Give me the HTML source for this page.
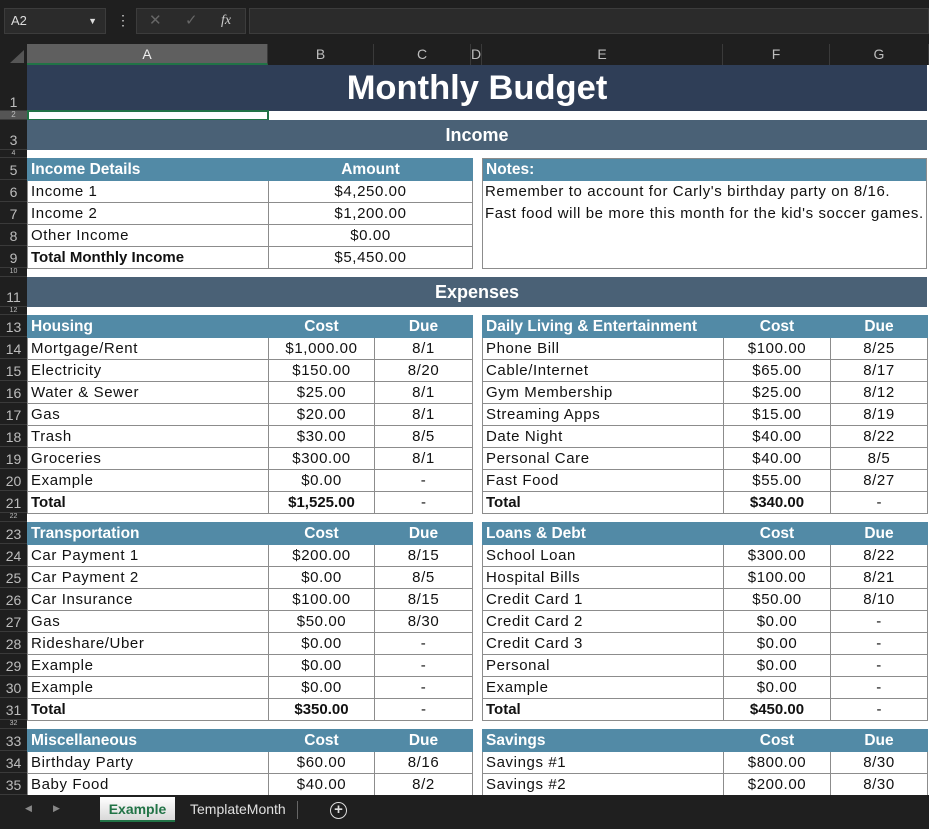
<!DOCTYPE html><html><head><style>
*{margin:0;padding:0;box-sizing:border-box}
body{width:929px;height:829px;overflow:hidden;background:#fff;font-family:"Liberation Sans",sans-serif;position:relative}
.a{position:absolute}
table{position:absolute;border-collapse:collapse;table-layout:fixed;font-size:15px;letter-spacing:0.6px;color:#111}
td{height:22px;border:1px solid #8c8c8c;padding:0 3px;white-space:nowrap;overflow:hidden;line-height:20px}
td.c{text-align:center}
tr.h td{background:#528aa6;color:#fff;font-weight:bold;font-size:15.5px;letter-spacing:0;border-color:#528aa6}
tr.t td{font-weight:bold;letter-spacing:0}
.rh{position:absolute;left:0;width:27px;background:#1f1f1f;color:#bdbdbd;font-size:14px;text-align:center;border-bottom:1px solid #3a3a3a;line-height:1}
.ch{position:absolute;top:44px;height:21px;background:#1f1f1f;color:#bdbdbd;font-size:14px;text-align:center;line-height:21px;border-right:1px solid #3a3a3a}
.band{position:absolute;left:27px;width:900px;background:#4a6176;color:#fff;font-weight:bold;text-align:center;font-size:18px}
</style></head><body>
<div class="a" style="left:0;top:0;width:929px;height:44px;background:#1f1f1f"></div>
<div class="a" style="left:4px;top:8px;width:102px;height:26px;background:#2b2b2b;border:1px solid #3c3c3c;color:#ddd;font-size:13px;line-height:24px;padding-left:6px">A2<span style="position:absolute;right:8px;top:0;font-size:9px">▼</span></div>
<div class="a" style="left:116px;top:12px;color:#ccc;font-size:14px">⋮</div>
<div class="a" style="left:136px;top:8px;width:110px;height:26px;background:#2b2b2b;border:1px solid #3c3c3c;color:#666;font-size:15px;line-height:24px"><span style="position:absolute;left:12px">✕</span><span style="position:absolute;left:48px">✓</span><span style="position:absolute;left:84px;color:#ccc;font-style:italic;font-family:'Liberation Serif';font-size:14px">fx</span></div>
<div class="a" style="left:249px;top:8px;width:680px;height:26px;background:#2b2b2b;border:1px solid #3c3c3c"></div>
<div class="a" style="left:0;top:44px;width:27px;height:21px;background:#1f1f1f"></div>
<div class="a" style="left:10px;top:50px;width:0;height:0;border-left:14px solid transparent;border-bottom:13px solid #555"></div>
<div class="ch" style="left:27px;width:241px;background:#5f5f5f;color:#eee;border-bottom:2px solid #217346">A</div>
<div class="ch" style="left:268px;width:106px">B</div>
<div class="ch" style="left:374px;width:97px">C</div>
<div class="ch" style="left:471px;width:11px;text-align:left">D</div>
<div class="ch" style="left:482px;width:241px">E</div>
<div class="ch" style="left:723px;width:107px">F</div>
<div class="ch" style="left:830px;width:99px">G</div>

<div class="rh" style="top:65px;height:46px;padding-top:30px">1</div>
<div class="rh" style="top:111px;height:9px;font-size:8px;background:#555">2</div>
<div class="rh" style="top:120px;height:30px;padding-top:13px">3</div>
<div class="rh" style="top:150px;height:8px;font-size:7px">4</div>
<div class="rh" style="top:158px;height:22px;padding-top:5px">5</div>
<div class="rh" style="top:180px;height:22px;padding-top:5px">6</div>
<div class="rh" style="top:202px;height:22px;padding-top:5px">7</div>
<div class="rh" style="top:224px;height:22px;padding-top:5px">8</div>
<div class="rh" style="top:246px;height:22px;padding-top:5px">9</div>
<div class="rh" style="top:268px;height:9px;font-size:7px">10</div>
<div class="rh" style="top:277px;height:30px;padding-top:13px">11</div>
<div class="rh" style="top:307px;height:8px;font-size:7px">12</div>
<div class="rh" style="top:315px;height:22px;padding-top:5px">13</div>
<div class="rh" style="top:337px;height:22px;padding-top:5px">14</div>
<div class="rh" style="top:359px;height:22px;padding-top:5px">15</div>
<div class="rh" style="top:381px;height:22px;padding-top:5px">16</div>
<div class="rh" style="top:403px;height:22px;padding-top:5px">17</div>
<div class="rh" style="top:425px;height:22px;padding-top:5px">18</div>
<div class="rh" style="top:447px;height:22px;padding-top:5px">19</div>
<div class="rh" style="top:469px;height:22px;padding-top:5px">20</div>
<div class="rh" style="top:491px;height:22px;padding-top:5px">21</div>
<div class="rh" style="top:513px;height:9px;font-size:7px">22</div>
<div class="rh" style="top:522px;height:22px;padding-top:5px">23</div>
<div class="rh" style="top:544px;height:22px;padding-top:5px">24</div>
<div class="rh" style="top:566px;height:22px;padding-top:5px">25</div>
<div class="rh" style="top:588px;height:22px;padding-top:5px">26</div>
<div class="rh" style="top:610px;height:22px;padding-top:5px">27</div>
<div class="rh" style="top:632px;height:22px;padding-top:5px">28</div>
<div class="rh" style="top:654px;height:22px;padding-top:5px">29</div>
<div class="rh" style="top:676px;height:22px;padding-top:5px">30</div>
<div class="rh" style="top:698px;height:22px;padding-top:5px">31</div>
<div class="rh" style="top:720px;height:9px;font-size:7px">32</div>
<div class="rh" style="top:729px;height:22px;padding-top:5px">33</div>
<div class="rh" style="top:751px;height:22px;padding-top:5px">34</div>
<div class="rh" style="top:773px;height:22px;padding-top:5px">35</div>

<div class="a" style="left:27px;top:65px;width:900px;height:46px;background:#2f3e57;color:#fff;font-weight:bold;font-size:34.5px;text-align:center;line-height:46px">Monthly Budget</div>
<div class="a" style="left:27px;top:110px;width:242px;height:11px;border:2px solid #217346"></div>
<div class="band" style="top:120px;height:30px;line-height:30px">Income</div>
<div class="band" style="top:277px;height:30px;line-height:30px">Expenses</div>

<table style="left:27px;top:158px;width:445px"><colgroup><col style="width:241px"><col style="width:204px"></colgroup>
<tr class="h"><td>Income Details</td><td class="c">Amount</td></tr>
<tr><td>Income 1</td><td class="c">$4,250.00</td></tr>
<tr><td>Income 2</td><td class="c">$1,200.00</td></tr>
<tr><td>Other Income</td><td class="c">$0.00</td></tr>
<tr><td style="font-weight:bold;letter-spacing:0">Total Monthly Income</td><td class="c">$5,450.00</td></tr></table>

<div class="a" style="left:482px;top:158px;width:445px;height:111px;border:1px solid #8c8c8c;font-size:15px;letter-spacing:0.6px;color:#111">
<div style="background:#528aa6;color:#fff;font-weight:bold;font-size:15.5px;letter-spacing:0;height:22px;line-height:22px;padding-left:3px">Notes:</div>
<div style="padding-left:2px;line-height:22px;white-space:nowrap">Remember to account for Carly's birthday party on 8/16.<br>Fast food will be more this month for the kid's soccer games.</div></div>

<table style="left:27px;top:315px;width:445px"><colgroup><col style="width:241px"><col style="width:106px"><col style="width:98px"></colgroup>
<tr class="h"><td>Housing</td><td class="c">Cost</td><td class="c">Due</td></tr>
<tr><td>Mortgage/Rent</td><td class="c">$1,000.00</td><td class="c">8/1</td></tr>
<tr><td>Electricity</td><td class="c">$150.00</td><td class="c">8/20</td></tr>
<tr><td>Water &amp; Sewer</td><td class="c">$25.00</td><td class="c">8/1</td></tr>
<tr><td>Gas</td><td class="c">$20.00</td><td class="c">8/1</td></tr>
<tr><td>Trash</td><td class="c">$30.00</td><td class="c">8/5</td></tr>
<tr><td>Groceries</td><td class="c">$300.00</td><td class="c">8/1</td></tr>
<tr><td>Example</td><td class="c">$0.00</td><td class="c">-</td></tr>
<tr class="t"><td>Total</td><td class="c">$1,525.00</td><td class="c" style="font-weight:normal">-</td></tr></table>

<table style="left:482px;top:315px;width:445px"><colgroup><col style="width:241px"><col style="width:107px"><col style="width:97px"></colgroup>
<tr class="h"><td>Daily Living &amp; Entertainment</td><td class="c">Cost</td><td class="c">Due</td></tr>
<tr><td>Phone Bill</td><td class="c">$100.00</td><td class="c">8/25</td></tr>
<tr><td>Cable/Internet</td><td class="c">$65.00</td><td class="c">8/17</td></tr>
<tr><td>Gym Membership</td><td class="c">$25.00</td><td class="c">8/12</td></tr>
<tr><td>Streaming Apps</td><td class="c">$15.00</td><td class="c">8/19</td></tr>
<tr><td>Date Night</td><td class="c">$40.00</td><td class="c">8/22</td></tr>
<tr><td>Personal Care</td><td class="c">$40.00</td><td class="c">8/5</td></tr>
<tr><td>Fast Food</td><td class="c">$55.00</td><td class="c">8/27</td></tr>
<tr class="t"><td>Total</td><td class="c">$340.00</td><td class="c" style="font-weight:normal">-</td></tr></table>

<table style="left:27px;top:522px;width:445px"><colgroup><col style="width:241px"><col style="width:106px"><col style="width:98px"></colgroup>
<tr class="h"><td>Transportation</td><td class="c">Cost</td><td class="c">Due</td></tr>
<tr><td>Car Payment 1</td><td class="c">$200.00</td><td class="c">8/15</td></tr>
<tr><td>Car Payment 2</td><td class="c">$0.00</td><td class="c">8/5</td></tr>
<tr><td>Car Insurance</td><td class="c">$100.00</td><td class="c">8/15</td></tr>
<tr><td>Gas</td><td class="c">$50.00</td><td class="c">8/30</td></tr>
<tr><td>Rideshare/Uber</td><td class="c">$0.00</td><td class="c">-</td></tr>
<tr><td>Example</td><td class="c">$0.00</td><td class="c">-</td></tr>
<tr><td>Example</td><td class="c">$0.00</td><td class="c">-</td></tr>
<tr class="t"><td>Total</td><td class="c">$350.00</td><td class="c" style="font-weight:normal">-</td></tr></table>

<table style="left:482px;top:522px;width:445px"><colgroup><col style="width:241px"><col style="width:107px"><col style="width:97px"></colgroup>
<tr class="h"><td>Loans &amp; Debt</td><td class="c">Cost</td><td class="c">Due</td></tr>
<tr><td>School Loan</td><td class="c">$300.00</td><td class="c">8/22</td></tr>
<tr><td>Hospital Bills</td><td class="c">$100.00</td><td class="c">8/21</td></tr>
<tr><td>Credit Card 1</td><td class="c">$50.00</td><td class="c">8/10</td></tr>
<tr><td>Credit Card 2</td><td class="c">$0.00</td><td class="c">-</td></tr>
<tr><td>Credit Card 3</td><td class="c">$0.00</td><td class="c">-</td></tr>
<tr><td>Personal</td><td class="c">$0.00</td><td class="c">-</td></tr>
<tr><td>Example</td><td class="c">$0.00</td><td class="c">-</td></tr>
<tr class="t"><td>Total</td><td class="c">$450.00</td><td class="c" style="font-weight:normal">-</td></tr></table>

<table style="left:27px;top:729px;width:445px"><colgroup><col style="width:241px"><col style="width:106px"><col style="width:98px"></colgroup>
<tr class="h"><td>Miscellaneous</td><td class="c">Cost</td><td class="c">Due</td></tr>
<tr><td>Birthday Party</td><td class="c">$60.00</td><td class="c">8/16</td></tr>
<tr><td>Baby Food</td><td class="c">$40.00</td><td class="c">8/2</td></tr></table>

<table style="left:482px;top:729px;width:445px"><colgroup><col style="width:241px"><col style="width:107px"><col style="width:97px"></colgroup>
<tr class="h"><td>Savings</td><td class="c">Cost</td><td class="c">Due</td></tr>
<tr><td>Savings #1</td><td class="c">$800.00</td><td class="c">8/30</td></tr>
<tr><td>Savings #2</td><td class="c">$200.00</td><td class="c">8/30</td></tr></table>

<div class="a" style="left:0;top:795px;width:929px;height:34px;background:#1f1f1f"></div>
<div class="a" style="left:25px;top:803px;color:#888;font-size:9px">◀</div>
<div class="a" style="left:53px;top:803px;color:#888;font-size:9px">▶</div>
<div class="a" style="left:100px;top:797px;width:75px;height:25px;background:linear-gradient(#fff,#d9d9d9);border-bottom:2px solid #217346;color:#217346;font-weight:bold;font-size:14px;text-align:center;line-height:25px">Example</div>
<div class="a" style="left:190px;top:797px;color:#e0e0e0;font-size:14px;line-height:25px">TemplateMonth</div>
<div class="a" style="left:297px;top:801px;width:1px;height:18px;background:#666"></div>
<div class="a" style="left:330px;top:802px;width:17px;height:17px;border:1.5px solid #ddd;border-radius:50%;color:#ddd;font-size:15px;text-align:center;line-height:14px;font-weight:bold">+</div>
</body></html>
